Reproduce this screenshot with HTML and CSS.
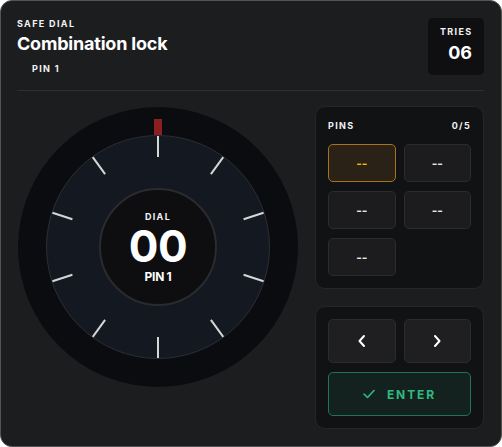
FILE: index.html
```html
<!DOCTYPE html>
<html lang="en">
<head>
    <meta charset="UTF-8">
    <meta name="viewport" content="width=device-width, initial-scale=1.0">
    <title>Safe Dial</title>
    <link rel="stylesheet" href="styles.css">
</head>
<body>
    <div class="card">
        <div class="top">
            <div>
                <div class="eyebrow">SAFE DIAL</div>
                <h1>Combination lock</h1>
                <div class="eyebrow badge">PIN 1</div>
            </div>
            <div class="tries">
                <div class="eyebrow">TRIES</div>
                <div class="tries-num">06</div>
            </div>
        </div>
        <div class="divider"></div>

        <div class="main">
            <div class="dial-col">
                <div class="dial">
                    <svg class="ticks" width="280" height="280" viewBox="0 0 280 280">
                        <g stroke="#d6d6d6" stroke-width="2">
                            <line x1="140" y1="29" x2="140" y2="50" />
                            <line x1="140" y1="29" x2="140" y2="50" transform="rotate(36 140 140)" />
                            <line x1="140" y1="29" x2="140" y2="50" transform="rotate(72 140 140)" />
                            <line x1="140" y1="29" x2="140" y2="50" transform="rotate(108 140 140)" />
                            <line x1="140" y1="29" x2="140" y2="50" transform="rotate(144 140 140)" />
                            <line x1="140" y1="29" x2="140" y2="50" transform="rotate(180 140 140)" />
                            <line x1="140" y1="29" x2="140" y2="50" transform="rotate(216 140 140)" />
                            <line x1="140" y1="29" x2="140" y2="50" transform="rotate(252 140 140)" />
                            <line x1="140" y1="29" x2="140" y2="50" transform="rotate(288 140 140)" />
                            <line x1="140" y1="29" x2="140" y2="50" transform="rotate(324 140 140)" />
                        </g>
                        <rect x="136" y="12" width="8" height="16" fill="#8a1f1f" />
                    </svg>
                    <div class="face">
                        <div class="hub">
                            <div class="eyebrow">DIAL</div>
                            <div class="dial-num">00</div>
                            <div class="dial-pin">PIN 1</div>
                        </div>
                    </div>
                </div>
            </div>

            <div class="side">
                <div class="panel">
                    <div class="panel-head">
                        <span class="eyebrow">PINS</span>
                        <span class="eyebrow">0/5</span>
                    </div>
                    <div class="pins">
                        <div class="pin active">--</div>
                        <div class="pin">--</div>
                        <div class="pin">--</div>
                        <div class="pin">--</div>
                        <div class="pin">--</div>
                    </div>
                </div>

                <div class="panel">
                    <div class="arrows">
                        <button class="btn">
                            <svg width="10" height="14" viewBox="0 0 10 14"><path d="M7 2 L2.5 7 L7 12" fill="none" stroke="#fff" stroke-width="2" stroke-linecap="round" stroke-linejoin="round"/></svg>
                        </button>
                        <button class="btn">
                            <svg width="10" height="14" viewBox="0 0 10 14"><path d="M3 2 L7.5 7 L3 12" fill="none" stroke="#fff" stroke-width="2" stroke-linecap="round" stroke-linejoin="round"/></svg>
                        </button>
                    </div>
                    <button class="enter">
                        <svg width="12" height="10" viewBox="0 0 12 10"><path d="M1 5 L4.5 8.5 L11 1.5" fill="none" stroke="#2fb981" stroke-width="1.6" stroke-linecap="round" stroke-linejoin="round"/></svg>
                        ENTER
                    </button>
                </div>
            </div>
        </div>
    </div>
</body>
</html>
```

FILE: styles.css
```css
body {
    margin: 0;
    background: #ffffff;
    font-family: Inter, "Liberation Sans", sans-serif;
    color: #ffffff;
}
.card {
    width: 502px;
    height: 447px;
    box-sizing: border-box;
    background: #1c1d1f;
    border: 1px solid #535353;
    border-radius: 12px;
    padding: 17px 17px 17px 16px;
}
.top {
    display: flex;
    justify-content: space-between;
    align-items: flex-start;
}
.eyebrow {
    font-size: 9px;
    line-height: 12px;
    font-weight: 700;
    letter-spacing: 0.15em;
    color: #f2f2f2;
}
h1 {
    margin: 2px 0 0;
    font-size: 18px;
    line-height: 24px;
    font-weight: 700;
    letter-spacing: -0.2px;
}
.badge {
    display: inline-block;
    padding: 0 15px;
    margin-top: 5px;
}
.tries {
    width: 56px;
    box-sizing: border-box;
    background: #0f0f12;
    border-radius: 5px;
    padding: 8px 12px 11px;
    text-align: right;
}
.tries-num {
    margin-top: 4px;
    font-size: 18px;
    line-height: 22px;
    font-weight: 700;
}
.divider {
    height: 1px;
    background: #2e2f33;
    margin-top: 14px;
}
.main {
    display: grid;
    grid-template-columns: 1fr 169px;
    gap: 16px;
    margin-top: 15px;
}
.dial-col {
    display: flex;
    justify-content: center;
    padding-top: 1px;
}
.dial {
    position: relative;
    width: 280px;
    height: 280px;
    border-radius: 50%;
    background: #0b0c0f;
    display: flex;
    align-items: center;
    justify-content: center;
}
.face {
    width: 224px;
    height: 224px;
    box-sizing: border-box;
    border-radius: 50%;
    background: #141820;
    border: 1px solid #2b2e35;
    display: flex;
    align-items: center;
    justify-content: center;
}
.ticks {
    position: absolute;
    left: 0;
    top: 0;
    z-index: 1;
}
.hub {
    width: 118px;
    height: 118px;
    box-sizing: border-box;
    border-radius: 50%;
    background: #0e0e10;
    border: 2px solid #2a2b2f;
    display: flex;
    flex-direction: column;
    align-items: center;
    justify-content: center;
}
.dial-num {
    font-size: 44px;
    line-height: 40px;
    font-weight: 700;
    letter-spacing: -0.5px;
    margin: 3px 0 4px;
}
.dial-pin {
    font-size: 12px;
    line-height: 14px;
    font-weight: 700;
    letter-spacing: -0.3px;
}
.side {
    display: flex;
    flex-direction: column;
    gap: 17px;
}
.panel {
    background: #111214;
    border: 1px solid #25262a;
    border-radius: 10px;
    padding: 12px;
}
.panel-head {
    display: flex;
    justify-content: space-between;
    margin-top: 1px;
}
.pins {
    display: grid;
    grid-template-columns: 1fr 1fr;
    gap: 9px 8px;
    margin-top: 12px;
}
.pin {
    height: 38px;
    box-sizing: border-box;
    background: #1c1c1e;
    border: 1px solid #2c2c30;
    border-radius: 5px;
    display: flex;
    align-items: center;
    justify-content: center;
    font-size: 12px;
    font-weight: 700;
    color: #e8e8e8;
}
.pin.active {
    background: #2a2117;
    border-color: #a8731c;
    color: #f0b90b;
}
.arrows {
    display: grid;
    grid-template-columns: 1fr 1fr;
    gap: 8px;
}
.btn {
    height: 44px;
    background: #1f1f21;
    border: 1px solid #2c2c30;
    border-radius: 5px;
    display: flex;
    align-items: center;
    justify-content: center;
    cursor: pointer;
}
.enter {
    width: 100%;
    height: 44px;
    margin-top: 9px;
    background: #14221f;
    border: 1px solid #1f7454;
    border-radius: 5px;
    color: #2fb981;
    font-family: Inter, "Liberation Sans", sans-serif;
    font-size: 12px;
    font-weight: 700;
    letter-spacing: 0.16em;
    display: flex;
    align-items: center;
    justify-content: center;
    gap: 12px;
    cursor: pointer;
}
```
